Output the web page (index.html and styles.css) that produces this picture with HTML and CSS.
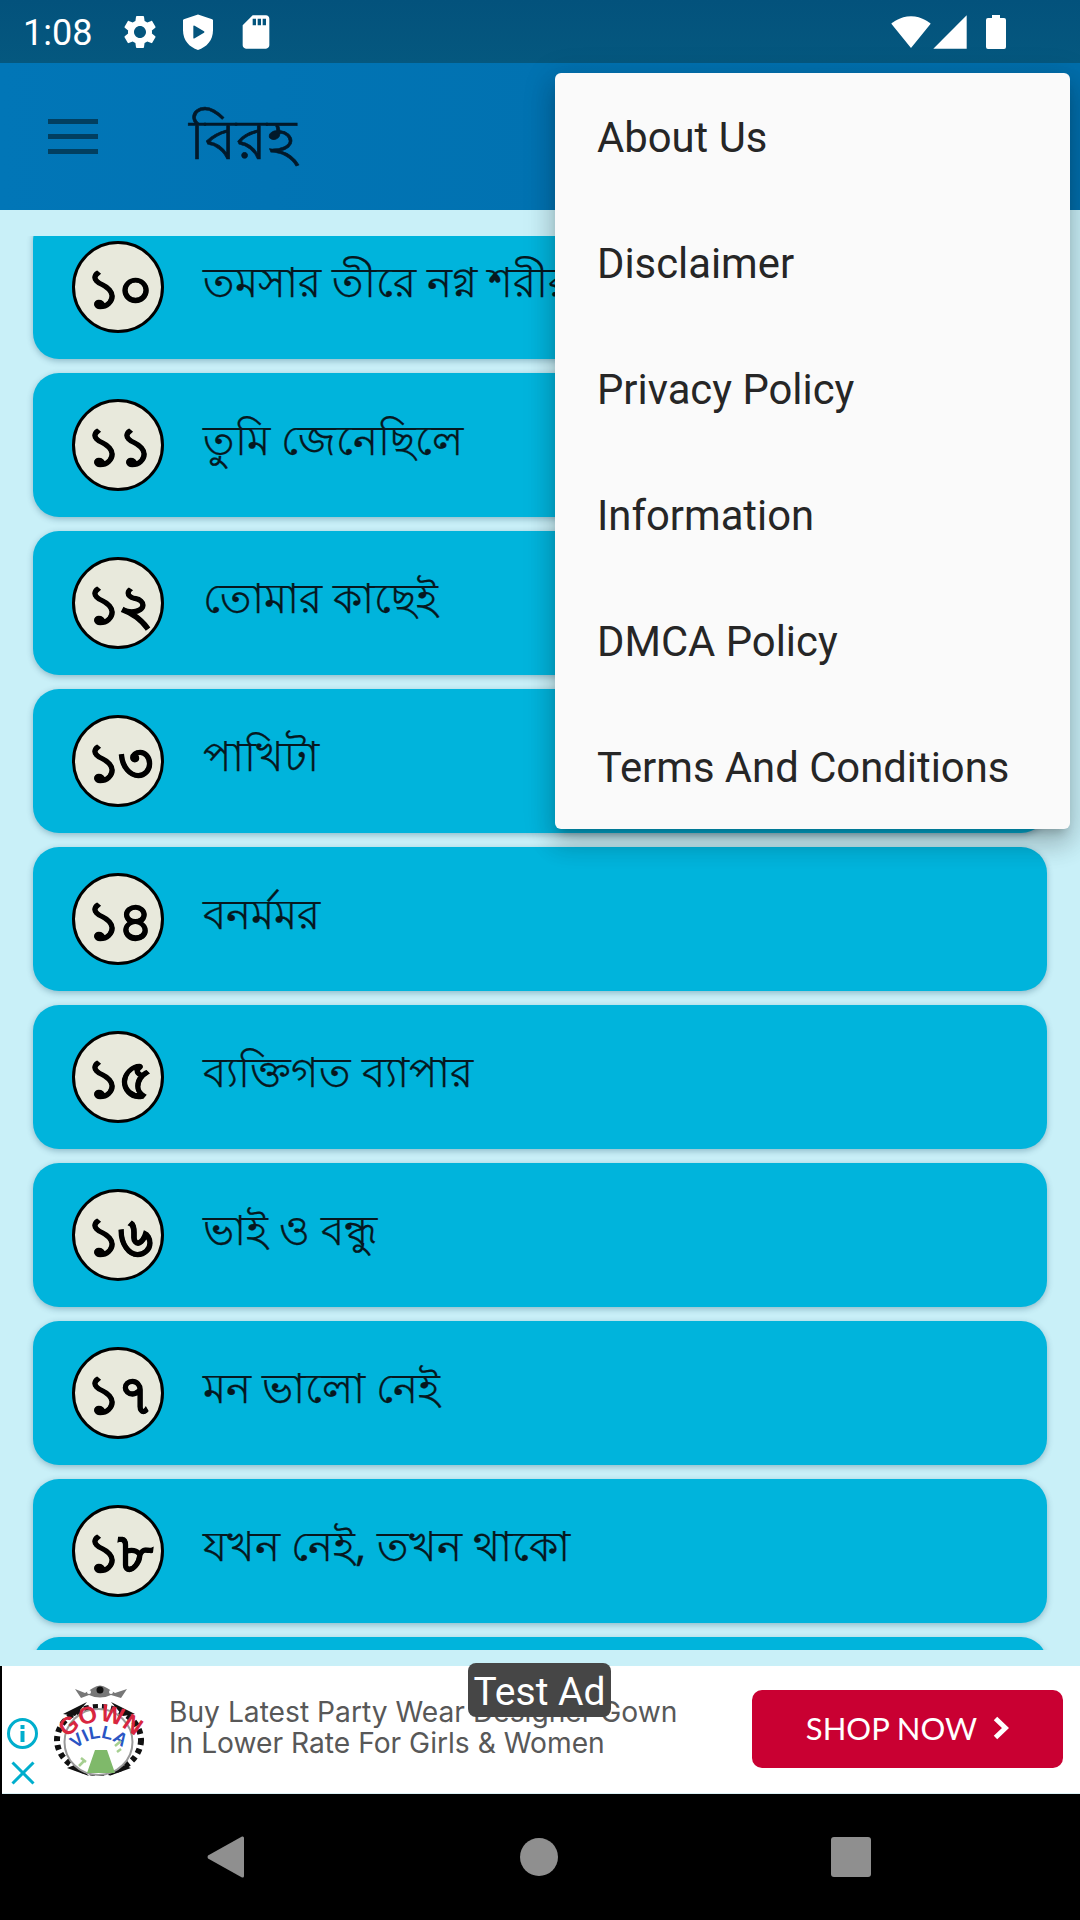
FILE: index.html
```html
<!DOCTYPE html>
<html lang="bn">
<head>
<meta charset="utf-8">
<title>বিরহ</title>
<link rel="stylesheet" href="styles.css">
</head>
<body>
<div class="screen">
  <header class="status">
    <span class="time">1:08</span>
    <svg class="sicon gear" viewBox="0 0 24 24"><path d="M19.14,12.94c0.04-0.3,0.06-0.61,0.06-0.94c0-0.32-0.02-0.64-0.07-0.94l2.03-1.58c0.18-0.14,0.23-0.41,0.12-0.61 l-1.92-3.32c-0.12-0.22-0.37-0.29-0.59-0.22l-2.39,0.96c-0.5-0.38-1.03-0.7-1.62-0.94L14.4,2.81c-0.04-0.24-0.24-0.41-0.48-0.41 h-3.84c-0.24,0-0.43,0.17-0.47,0.41L9.25,5.35C8.66,5.59,8.12,5.92,7.63,6.29L5.24,5.33c-0.22-0.08-0.47,0-0.59,0.22L2.74,8.87 C2.62,9.08,2.66,9.34,2.86,9.48l2.03,1.58C4.84,11.36,4.8,11.69,4.8,12s0.02,0.64,0.07,0.94l-2.03,1.58 c-0.18,0.14-0.23,0.41-0.12,0.61l1.92,3.32c0.12,0.22,0.37,0.29,0.59,0.22l2.39-0.96c0.5,0.38,1.03,0.7,1.62,0.94l0.36,2.54 c0.05,0.24,0.24,0.41,0.48,0.41h3.84c0.24,0,0.44-0.17,0.47-0.41l0.36-2.54c0.59-0.24,1.13-0.56,1.62-0.94l2.39,0.96 c0.22,0.08,0.47,0,0.59-0.22l1.92-3.32c0.12-0.22,0.07-0.47-0.12-0.61L19.14,12.94z M12,15.6c-1.98,0-3.6-1.62-3.6-3.6 s1.62-3.6,3.6-3.6s3.6,1.62,3.6,3.6S13.98,15.6,12,15.6z"/></svg>
    <svg class="sicon" viewBox="0 0 24 24"><path fill-rule="evenodd" d="M12 1.5 L20.5 4.3 Q21 4.5 21 5 V11 C21 17 17.2 21.2 12 22.8 C6.8 21.2 3 17 3 11 V5 Q3 4.5 3.5 4.3 Z M10 8.2 Q9.2 7.8 9.2 8.6 V15.4 Q9.2 16.2 10 15.8 L15.6 12.5 Q16.2 12 15.6 11.5 Z"/></svg>
    <svg class="sicon" viewBox="0 0 24 24"><path d="M18 2h-8L4 8v12c0 1.1.9 2 2 2h12c1.1 0 2-.9 2-2V4c0-1.1-.9-2-2-2zm-6 6h-2V4h2v4zm3 0h-2V4h2v4zm3 0h-2V4h2v4z"/></svg>
    <span class="status-right">
      <svg class="sicon wifi" viewBox="0 0 24 24"><path d="M12 21.6 L23.8 7 C23.3 6.6 18.7 2.6 12 2.6 5.3 2.6 .7 6.6 .2 7 z"/></svg>
      <svg class="sicon signal" viewBox="0 0 24 24"><path d="M2 22h20V2z"/></svg>
      <svg class="battery" viewBox="0 0 20 34"><path d="M6 0h8v3h4a2 2 0 0 1 2 2v27a2 2 0 0 1-2 2H2a2 2 0 0 1-2-2V5a2 2 0 0 1 2-2h4z"/></svg>
    </span>
  </header>

  <div class="appbar">
    <span class="burger"><i></i><i></i><i></i></span>
    <h1 class="title">বিরহ</h1>
  </div>

  <main class="content">
    <div class="list">
      <div class="card first"><span class="badge">১০</span><span class="label">তমসার তীরে নগ্ন শরীর</span></div>
      <div class="card"><span class="badge">১১</span><span class="label">তুমি জেনেছিলে</span></div>
      <div class="card"><span class="badge">১২</span><span class="label">তোমার কাছেই</span></div>
      <div class="card"><span class="badge">১৩</span><span class="label">পাখিটা</span></div>
      <div class="card"><span class="badge">১৪</span><span class="label">বনর্মমর</span></div>
      <div class="card"><span class="badge">১৫</span><span class="label">ব্যক্তিগত ব্যাপার</span></div>
      <div class="card"><span class="badge">১৬</span><span class="label">ভাই ও বন্ধু</span></div>
      <div class="card"><span class="badge">১৭</span><span class="label">মন ভালো নেই</span></div>
      <div class="card"><span class="badge">১৮</span><span class="label">যখন নেই, তখন থাকো</span></div>
      <div class="card"></div>
    </div>
  </main>

  <aside class="ad">
    <div class="ad-controls">
      <svg class="ad-info" viewBox="0 0 31 31"><circle cx="15.5" cy="15.5" r="14" fill="none" stroke="#00aecd" stroke-width="3"/><rect x="13.5" y="13" width="4" height="11" fill="#00aecd"/><rect x="13.5" y="7" width="4" height="4" fill="#00aecd"/></svg>
      <svg class="ad-close" viewBox="0 0 24 24"><path d="M1.5 1.5 L22.5 22.5 M22.5 1.5 L1.5 22.5" stroke="#00aecd" stroke-width="3" fill="none"/></svg>
    </div>
    <svg class="ad-logo" viewBox="0 0 96 92">
      <defs>
        <path id="arcTop" d="M12 56 Q46 20 84 54"/>
        <path id="arcMid" d="M22 66 Q47 42 72 66"/>
      </defs>
      <path d="M22 5 L32 9 L40 4 Q47 -1 54 4 L62 9 L74 5 L68 14 L58 11 Q47 16 36 11 L28 14 Z" fill="#777"/>
      <circle cx="47" cy="6" r="3.5" fill="#111"/>
      <circle cx="36" cy="8" r="2" fill="#fff"/><circle cx="58" cy="8" r="2" fill="#fff"/>
      <ellipse cx="46" cy="56" rx="42" ry="33" fill="none" stroke="#111" stroke-width="6" stroke-dasharray="5 4"/>
      <path d="M10 30 L34 18 L22 32 Z M82 30 L58 18 L70 32 Z M14 84 L36 92 L24 80 Z M78 84 L56 92 L68 80 Z" fill="#111"/>
      <ellipse cx="45.500" cy="58" rx="34" ry="33" fill="#fff" stroke="#999" stroke-width="2"/>
      <text class="logo-red"><textPath href="#arcTop" startOffset="3%">GOWN</textPath></text>
      <text class="logo-blue"><textPath href="#arcMid" startOffset="2%">VILLA</textPath></text>
      <path d="M42 66 h12 l8 23 h-28 z" fill="#7fb96a"/>
      <path d="M62 62 l6 -5 M26 82 l6 -6 M28 74 l5 4 M64 68 l4 -3" stroke="#a6cf91" stroke-width="2.500"/>
    </svg>
    <p class="ad-text">Buy Latest Party Wear Designer Gown<br>In Lower Rate For Girls &amp; Women</p>
    <div class="shop">SHOP NOW<svg class="shop-arrow" viewBox="0 0 16 24"><path d="M2.5 2.5 L12.5 12 L2.5 21.5" fill="none" stroke="#fff" stroke-width="5"/></svg></div>
    <div class="test-ad">Test Ad</div>
  </aside>

  <nav class="navbar">
    <svg class="nav-back" viewBox="0 0 37 42"><path d="M35 0.5 Q37 0 37 2 V40 Q37 42 35 41.5 L1 22.5 Q0 21 1 19.5 Z"/></svg>
    <span class="nav-home"></span>
    <span class="nav-recent"></span>
  </nav>

  <ul class="menu">
    <li>About Us</li>
    <li>Disclaimer</li>
    <li>Privacy Policy</li>
    <li>Information</li>
    <li>DMCA Policy</li>
    <li>Terms And Conditions</li>
  </ul>
</div>
</body>
</html>
```
FILE: styles.css
```css
* { box-sizing: border-box; }
html, body { margin: 0; padding: 0; }
body { font-family: Roboto, "Noto Sans", sans-serif; background: #000; }

.screen {
  position: relative;
  width: 1080px;
  height: 1920px;
  display: flex;
  flex-direction: column;
  overflow: hidden;
}

/* status bar */
.status {
  height: 63px;
  flex: none;
  display: flex;
  align-items: center;
  gap: 18px;
  padding: 1px 74px 0 23px;
  background: linear-gradient(#03527c, #05587f);
  color: #fff;
}
.time { font-size: 36px; width: 79px; padding-top: 2px; }
.sicon { width: 40px; height: 40px; fill: #fff; flex: none; }
.status-right { margin-left: auto; display: flex; align-items: center; }
.signal { margin-left: -1px; }
.battery { width: 20px; height: 34px; fill: #fff; margin-left: 16px; }

/* app bar */
.appbar {
  height: 147px;
  flex: none;
  display: flex;
  align-items: center;
  padding-left: 48px;
  background: linear-gradient(90deg, #0176b7, #016eab);
}
.burger {
  width: 50px;
  display: flex;
  flex-direction: column;
  gap: 10px;
  margin-top: -1px;
}
.burger i { display: block; height: 5px; background: #023f60; }
.title {
  margin: 0 0 0 91px;
  font-family: "Noto Sans", sans-serif;
  font-size: 56px;
  font-weight: 400;
  line-height: 1;
  color: #02192a;
  -webkit-text-stroke: .7px #02192a;
}

/* list */
.content {
  flex: none;
  height: 1456px;
  padding: 26px 33px 16px;
  background: #c9f0f8;
  display: flex;
}
.list {
  flex: 1;
  display: flex;
  flex-direction: column;
  gap: 14px;
  overflow: hidden;
  margin: 0 -33px;
  padding: 0 33px;
}
.card {
  flex: none;
  height: 144px;
  display: flex;
  align-items: center;
  padding-left: 39px;
  border-radius: 26px;
  background: #00b4dc;
  box-shadow: 0 2px 6px rgba(0, 60, 90, .3);
}
.first { margin-top: -21px; }
.badge {
  flex: none;
  width: 92px;
  height: 92px;
  display: flex;
  align-items: center;
  justify-content: center;
  border-radius: 50%;
  background: #e8e9dc;
  border: 3px solid #000;
  color: #000;
  font-family: "Noto Sans", sans-serif;
  font-size: 54px;
  font-weight: 700;
  line-height: 1;
  letter-spacing: -3px;
  -webkit-text-stroke: .8px #000;
}
.label {
  margin: -12px 0 0 39px;
  font-family: "Noto Sans", sans-serif;
  font-size: 42px;
  line-height: 56px;
  color: #06181f;
  white-space: nowrap;
  -webkit-text-stroke: .25px #06181f;
}

/* ad */
.ad {
  position: relative;
  height: 128px;
  flex: none;
  margin-left: 2px;
  display: flex;
  align-items: center;
  background: #fff;
  border-bottom: 1px solid #dcf2f6;
}
.ad-controls {
  flex: none;
  align-self: flex-end;
  margin-left: 5px;
  padding-bottom: 8px;
  display: flex;
  flex-direction: column;
  align-items: center;
  gap: 12px;
  width: 31px;
}
.ad-info { width: 31px; height: 31px; display: block; }
.ad-close { width: 24px; height: 24px; display: block; }
.ad-logo { width: 96px; height: 92px; margin-left: 15px; flex: none; overflow: visible; }
.logo-red {
  font: 700 24px "Liberation Sans", sans-serif;
  fill: #d8263f;
}
.logo-blue {
  font: 700 18px "Liberation Sans", sans-serif;
  fill: #2a55c4;
}
.ad-text {
  margin: -4px 0 0 20px;
  font-family: Inter, "Open Sans", sans-serif;
  font-size: 28.2px;
  line-height: 31px;
  color: #585858;
  white-space: nowrap;
}
.shop {
  margin: -2px 17px 0 auto;
  width: 311px;
  height: 78px;
  flex: none;
  display: flex;
  align-items: center;
  justify-content: center;
  gap: 16px;
  padding-bottom: 2px;
  border-radius: 10px;
  background: #c90032;
  color: #fff;
  font-family: Lato, sans-serif;
  font-size: 31px;
  font-weight: 400;
}
.shop-arrow { width: 16px; height: 24px; }
.test-ad {
  position: absolute;
  left: 466px;
  top: -3px;
  width: 143px;
  height: 54px;
  display: flex;
  align-items: center;
  justify-content: center;
  padding-top: 3px;
  border-radius: 8px;
  background: #464646;
  color: #fff;
  font-size: 39px;
}

/* nav */
.navbar {
  flex: none;
  height: 126px;
  display: flex;
  align-items: center;
  justify-content: space-between;
  padding: 0 209px 0 207px;
  background: #000;
}
.nav-back { width: 37px; height: 42px; fill: #8f8f8f; }
.nav-home { width: 38px; height: 38px; margin-left: 3px; border-radius: 50%; background: #8f8f8f; }
.nav-recent { width: 40px; height: 40px; border-radius: 3px; background: #8f8f8f; }

/* overflow menu */
.menu {
  position: absolute;
  left: 555px;
  top: 73px;
  width: 515px;
  margin: 0;
  padding: 0;
  list-style: none;
  border-radius: 6px;
  background: #fafafa;
  box-shadow: 0 8px 10px -5px rgba(0,0,0,.2), 0 16px 24px 2px rgba(0,0,0,.14), 0 6px 30px 5px rgba(0,0,0,.12);
}
.menu li {
  height: 126px;
  display: flex;
  align-items: center;
  padding: 2px 0 0 42px;
  font-family: Roboto, sans-serif;
  font-size: 41.8px;
  color: #262626;
}
```
